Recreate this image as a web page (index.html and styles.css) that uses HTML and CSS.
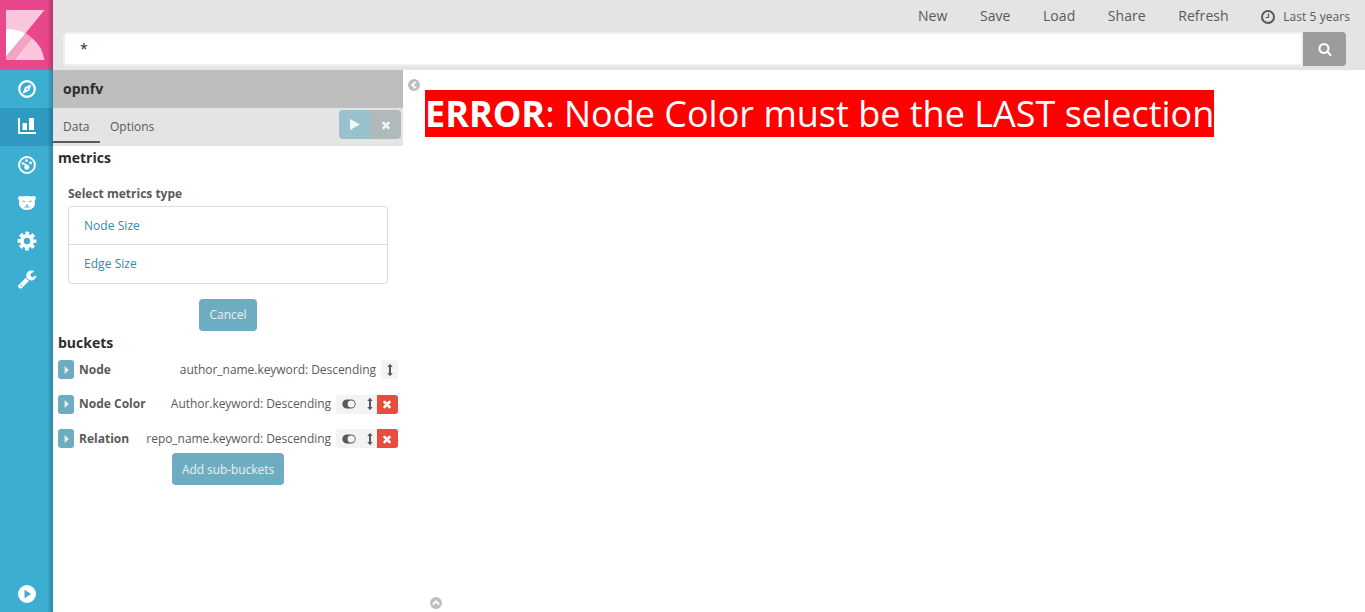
FILE: index.html
```html
<!DOCTYPE html>
<html lang="en">
<head>
<meta charset="utf-8">
<title>opnfv - Kibana</title>
<link rel="stylesheet" href="styles.css">
</head>
<body>
<svg class="defs" width="0" height="0">
  <symbol id="close" viewBox="0 0 1792 1792"><path d="M1490 1322q0 40-28 68l-136 136q-28 28-68 28t-68-28l-294-294-294 294q-28 28-68 28t-68-28l-136-136q-28-28-28-68t28-68l294-294-294-294q-28-28-28-68t28-68l136-136q28-28 68-28t68 28l294 294 294-294q28-28 68-28t68 28l136 136q28 28 28 68t-28 68l-294 294 294 294q28 28 28 68z"/></symbol>
  <symbol id="caret" viewBox="0 0 5 8"><path d="M0.600 0 4.800 4 0.600 8z"/></symbol>
  <symbol id="updown" viewBox="0 0 6 14"><path d="M3 .7 5.700 4H4v6h1.700L3 13.300.3 10H2V4H.3z"/></symbol>
  <symbol id="toggle" viewBox="0 0 14 10"><path fill-rule="evenodd" d="M4.800.5h4.400a4.500 4.500 0 0 1 0 9H4.800a4.500 4.500 0 0 1 0-9zM9.200 1.400a3.600 3.600 0 1 0 0 7.200 3.600 3.600 0 0 0 0-7.200z"/></symbol>
</svg>
<div class="app">
  <nav class="sidebar">
    <div class="logo">
      <svg width="39" height="50" viewBox="0 0 39 50">
        <path fill="#f9c6dc" d="M0 0h38.500L0 47z"/>
        <path fill="#fff" d="M0 19Q10 18.500 19.500 23.500L0 46.500z"/>
        <path fill="#f4a2c5" d="M19.500 23.300Q23 25 26 28L8 50H0V46.500z"/>
        <path fill="#f9c6dc" d="M26 28Q36 36 38.500 50H8z"/>
      </svg>
    </div>
    <a class="nav-item"><svg width="18" height="18" viewBox="0 0 18 18"><circle cx="9" cy="9" r="7.800" fill="none" stroke="#fff" stroke-width="2.200"/><path fill="#fff" fill-rule="evenodd" d="M13.500 4.300 11 10.700 4.500 13.700 7 7.300zM8.600 7.800v2.700l2-1.400z"/></svg></a>
    <a class="nav-item active"><svg width="18" height="18" viewBox="0 0 18 18"><path fill="#fff" d="M0 0h2v14h16v2H0zM4.500 5h4.500v7H4.500zM11 0h5v12h-5z"/></svg></a>
    <a class="nav-item"><svg width="18" height="18" viewBox="0 0 18 18"><circle cx="9" cy="9" r="7.900" fill="none" stroke="#fff" stroke-width="2"/><g fill="#fff"><circle cx="5" cy="7.500" r="1.200"/><circle cx="8.500" cy="4.700" r="1.400"/><circle cx="12.500" cy="7" r="1.400"/><circle cx="8.800" cy="11.300" r="2.500"/><path d="M5 6.500 10.500 9.500 8.500 12z"/></g></svg></a>
    <a class="nav-item"><svg width="18" height="18" viewBox="0 0 18 18"><path fill="#fff" fill-rule="evenodd" d="M0 3.200Q2 1.200 4.500 2.500 9 1.600 13.500 2.500 16 1.200 18 3.200 18 5.500 16.700 6.500L17 10.500Q16.500 13.500 13.500 15 9 17 4.500 15 1.500 13.500 1 10.500L1.300 6.500Q0 5.500 0 3.200zM4.500 7.500l2.500.8V7.200L4.500 6.500zM13.500 7.500l-2.500.8V7.200l2.500-.7zM7.500 10.500l1 .8v1.200H6.500v1h5v-1h-2v-1.200l1-.8z"/></svg></a>
    <a class="nav-item raised"><svg width="20" height="20" viewBox="0 0 20 20"><path fill="none" stroke="#fff" stroke-width="4" stroke-dasharray="3.900 2.580" stroke-dashoffset="1.950" d="M18.250 10A8.250 8.250 0 1 1 1.750 10 8.250 8.250 0 1 1 18.250 10z" transform="translate(.8 .8) scale(.92)"/><circle cx="10" cy="10" r="5.100" fill="none" stroke="#fff" stroke-width="3.800"/></svg></a>
    <a class="nav-item raised"><svg width="20" height="20" viewBox="0 0 1792 1792"><path fill="#fff" d="M448 1472q0-26-19-45t-45-19-45 19-19 45 19 45 45 19 45-19 19-45zm644-420l-682 682q-37 37-90 37-52 0-91-37l-106-108q-38-36-38-90 0-53 38-91l681-681q39 98 114.500 173.500t173.500 114.500zm634-435q0 39-23 106-47 134-164.500 217.500t-258.500 83.500q-185 0-316.500-131.500t-131.500-316.500 131.500-316.500 316.500-131.500q58 0 121.500 16.500t107.500 46.500q16 11 16 28t-16 28l-293 169v224l193 107q5-3 79-48.500t135.500-81 70.500-35.500q15 0 23.500 10t8.500 25z"/></svg></a>
    <a class="nav-item bottom"><svg width="18" height="18" viewBox="0 0 18 18"><path fill="#fff" fill-rule="evenodd" d="M9 0a9 9 0 1 0 0 18A9 9 0 0 0 9 0zM6.500 4.700 13 9l-6.500 4.300z"/></svg></a>
  </nav>
  <div class="content">
    <header class="topbar">
      <div class="menu">
        <a>New</a><a>Save</a><a>Load</a><a>Share</a><a>Refresh</a>
        <a class="time"><svg width="14" height="14" viewBox="0 0 14 14"><circle cx="7" cy="7" r="6" fill="none" stroke="#5a5a5a" stroke-width="2"/><path fill="none" stroke="#5a5a5a" stroke-width="1.200" d="M7.500 3.500v4H4.500"/></svg><span>Last 5 years</span></a>
      </div>
      <div class="search">
        <div class="query">*</div>
        <div class="search-button"><svg width="14" height="14" viewBox="0 0 1792 1792"><path fill="#fff" d="M1216 832q0-185-131.500-316.500t-316.500-131.500-316.500 131.500-131.500 316.500 131.500 316.500 316.500 131.500 316.500-131.500 131.500-316.500zm512 832q0 52-38 90t-90 38q-54 0-90-38l-343-342q-179 124-399 124-143 0-273.500-55.500t-225-150-150-225-55.500-273.500 55.500-273.500 150-225 225-150 273.500-55.500 273.500 55.500 225 150 150 225 55.500 273.500q0 220-124 399l343 343q37 37 37 90z"/></svg></div>
      </div>
    </header>
    <main class="main">
      <aside class="editor">
        <div class="index">opnfv</div>
        <div class="tabs">
          <a class="tab selected">Data</a><a class="tab">Options</a>
          <div class="actions">
            <span class="apply"><svg width="10" height="11" viewBox="0 0 10 11"><path fill="#f3f6f7" d="M0 0l10 5.500L0 11z"/></svg></span>
            <span class="discard"><svg width="12" height="12"><use href="#close"/></svg></span>
          </div>
        </div>
        <h2 class="title">metrics</h2>
        <div class="label">Select metrics type</div>
        <ul class="types"><li>Node Size</li><li>Edge Size</li></ul>
        <div class="center cancel"><button class="button">Cancel</button></div>
        <h2 class="title">buckets</h2>
        <div class="bucket">
          <span class="toggle"><svg width="5" height="8"><use href="#caret"/></svg></span><b>Node</b>
          <span class="desc">author_name.keyword: Descending</span>
          <span class="controls"><span class="single"><svg width="6" height="14"><use href="#updown"/></svg></span></span>
        </div>
        <div class="bucket">
          <span class="toggle"><svg width="5" height="8"><use href="#caret"/></svg></span><b>Node Color</b>
          <span class="desc">Author.keyword: Descending</span>
          <span class="controls"><span class="enable"><svg width="14" height="10"><use href="#toggle"/></svg></span><span class="move"><svg width="6" height="14"><use href="#updown"/></svg></span><span class="remove"><svg width="12" height="12"><use href="#close"/></svg></span></span>
        </div>
        <div class="bucket last">
          <span class="toggle"><svg width="5" height="8"><use href="#caret"/></svg></span><b>Relation</b>
          <span class="desc">repo_name.keyword: Descending</span>
          <span class="controls"><span class="enable"><svg width="14" height="10"><use href="#toggle"/></svg></span><span class="move"><svg width="6" height="14"><use href="#updown"/></svg></span><span class="remove"><svg width="12" height="12"><use href="#close"/></svg></span></span>
        </div>
        <div class="center"><button class="button add">Add sub-buckets</button></div>
      </aside>
      <section class="vis">
        <svg class="collapse" width="12" height="12" viewBox="0 0 12 12"><circle cx="6" cy="6" r="6" fill="#bebebe"/><path fill="none" stroke="#fff" stroke-width="1.900" d="M7.500 2.800 4.300 6l3.200 3.200"/></svg>
        <div class="canvas">
          <div class="error"><b>ERROR</b>: Node Color must be the LAST selection</div>
          <svg class="spy" width="12" height="12" viewBox="0 0 12 12"><circle cx="6" cy="6" r="6" fill="#bebebe"/><path fill="none" stroke="#fff" stroke-width="1.900" d="M2.800 7.500 6 4.300l3.200 3.200"/></svg>
        </div>
      </section>
    </main>
  </div>
</div>
</body>
</html>
```
FILE: styles.css
```css
* { box-sizing: border-box; }
body { margin: 0; font: 12px/18px "Open Sans", sans-serif; color: #5a5a5a; background: #fff; }
svg { display: block; flex: none; }
.defs { position: absolute; }
.app { display: flex; height: 612px; overflow: hidden; }
.sidebar { width: 53px; flex: none; display: flex; flex-direction: column; background: #3caed2; position: relative; }
.sidebar::after { content: ""; position: absolute; top: 0; right: 0; bottom: 0; width: 6px; background: linear-gradient(to right, rgba(0,0,0,0), rgba(0,0,0,.22)); }
.logo { height: 70px; padding: 10px 0 0 6px; background: #e8488b; }
.nav-item { height: 38px; display: flex; align-items: center; justify-content: center; padding-left: 1px; }
.nav-item.active { background: #2f99c1; }
.nav-item.raised { padding-bottom: 0; }
.nav-item.bottom { margin-top: auto; height: 36px; }
.content { flex: 1; min-width: 0; display: flex; flex-direction: column; }
.topbar { height: 70px; background: #e4e4e4; padding: 0 19px 0 10px; }
.menu { height: 32px; display: flex; justify-content: flex-end; align-items: center; gap: 32.500px; font-size: 14px; letter-spacing: .06px; margin-right: -4px; }
.time { display: flex; align-items: center; gap: 8px; font-size: 12px; padding-top: 1px; }
.search { display: flex; height: 34px; }
.query { flex: 1; background: #fff; border: 2px solid #ecf0f1; border-radius: 4px 0 0 4px; padding: 6px 15px; font-size: 14px; color: #2d2d2d; }
.search-button { width: 43px; background: #9c9c9c; border-radius: 0 4px 4px 0; display: flex; align-items: center; justify-content: center; }
.main { flex: 1; display: flex; min-height: 0; }
.editor { width: 350px; flex: none; }
.index { height: 38px; background: #bebebe; padding: 0 10px; line-height: 38px; font-size: 14px; font-weight: 700; color: #2d2d2d; }
.tabs { height: 38px; background: #e4e4e4; display: flex; align-items: flex-start; }
.tab { height: 35px; padding: 0 10px; line-height: 37px; }
.tab.selected { width: 47px; border-bottom: 2px solid #5a5a5a; }
.actions { display: flex; height: 29px; margin: 2px 2px 0 auto; border-radius: 4px; overflow: hidden; }
.actions span { width: 31px; display: flex; align-items: center; justify-content: center; }
.apply { background: #98c1cd; }
.discard { background: #b0babb; fill: #f3f6f7; }
.title { margin: 0; padding-left: 5px; height: 24px; font-size: 14px; line-height: 24px; color: #2d2d2d; }
.label { font-weight: 700; padding: 14px 15px 0; height: 36px; line-height: 19px; }
.types { list-style: none; margin: 0 15px; padding: 0; height: 78px; border: 1px solid #ddd; border-radius: 4px; color: #328caa; letter-spacing: .05px; }
.types li { height: 37px; padding-left: 15px; line-height: 37px; }
.types li + li { height: 38px; border-top: 1px solid #ddd; }
.center { display: flex; justify-content: center; }
.cancel { padding: 15px 0 0; }
.button { height: 32px; padding: 0 10px 2px; border: 0; border-radius: 4px; background: #6eadc1; color: #ecf0f1; font: 12px "Open Sans", sans-serif; }
.button.add { width: 112px; padding: 0; letter-spacing: -.07px; }
.bucket { display: flex; align-items: center; height: 34.500px; padding: 0 5px 5px; }
.bucket.last { height: 29px; padding: 5px 5px 5px; }
.toggle { width: 16px; height: 19px; border-radius: 3px; background: #6eadc1; fill: #ecf0f1; display: flex; align-items: center; justify-content: center; margin-right: 5px; }
.desc { margin-left: auto; letter-spacing: -.04px; }
.controls { display: flex; height: 19px; margin-left: 5px; border-radius: 3px; overflow: hidden; background: #f3f3f3; fill: #5a5a5a; }
.controls > span { display: flex; align-items: center; justify-content: center; }
.controls .single { width: 17px; }
.controls .enable { width: 26px; }
.controls .move { width: 15px; }
.controls .remove { width: 21px; padding-right: 1px; background: #e74c3c; fill: #fff; }
.vis { flex: 1; display: flex; padding: 9px 0 3px 5px; gap: 5px; }
.canvas { flex: 1; display: flex; flex-direction: column; align-items: flex-start; padding-top: 11px; }
.error { background: #f00; color: #fff; font-size: 36px; line-height: 47px; height: 47px; white-space: nowrap; }
.spy { margin: auto 0 0 5px; }
```
